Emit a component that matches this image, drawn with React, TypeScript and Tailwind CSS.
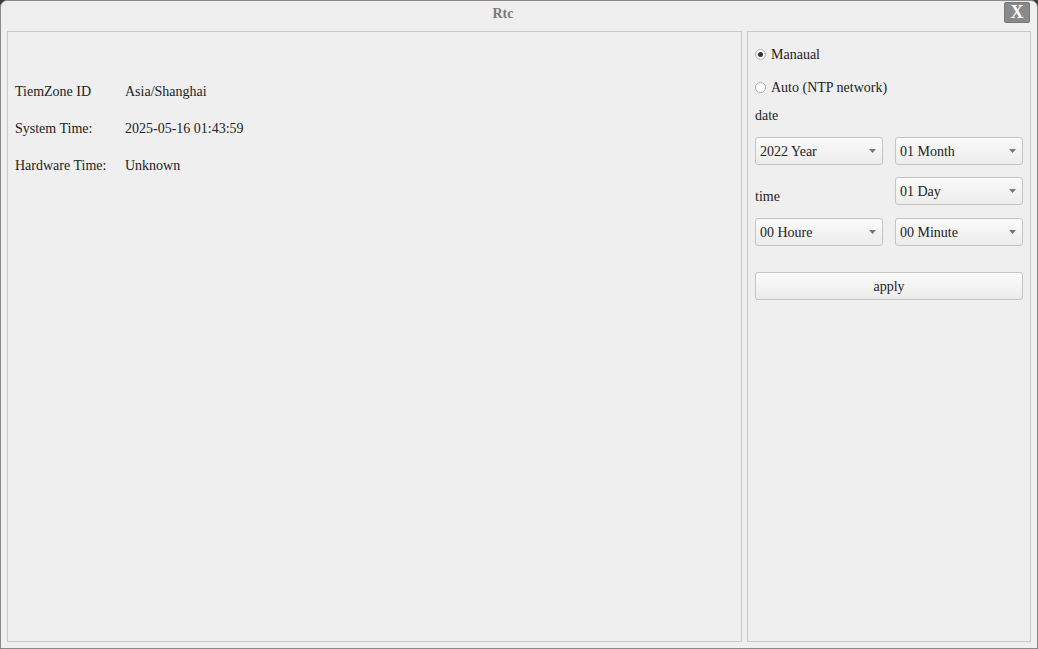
import React from 'react';

const serif = { fontFamily: '"Liberation Serif", "DejaVu Serif", serif' };

function Combo({ label }: { label: string }) {
  return (
    <div className="flex h-[28px] w-[128px] items-center justify-between rounded-[3px] border border-[#c4c4c4] bg-gradient-to-b from-[#fbfbfb] to-[#ececec] pl-[4px] pr-[6px] text-[14px] text-[#222]">
      <span>{label}</span>
      <svg width="7" height="4" viewBox="0 0 7 4">
        <path d="M0 0h7L3.5 4z" fill="#777" />
      </svg>
    </div>
  );
}

function Radio({ checked, label }: { checked?: boolean; label: string }) {
  return (
    <div className="flex items-center gap-[5px] text-[14px] text-[#222]">
      <span className="flex h-[11px] w-[11px] items-center justify-center rounded-full border border-[#aaa] bg-white">
        {checked && <span className="h-[5px] w-[5px] rounded-full bg-[#333]" />}
      </span>
      <span>{label}</span>
    </div>
  );
}

export default function App() {
  const info = [
    ['TiemZone ID', 'Asia/Shanghai'],
    ['System Time:', '2025-05-16 01:43:59'],
    ['Hardware Time:', 'Unknown'],
  ];

  return (
    <div className="h-[649px] w-[1038px] bg-[#3a3a3a]" style={serif}>
      <div className="flex h-full flex-col rounded-t-[7px] border border-[#8a8a8a] bg-[#efefef]">
        {/* title bar, title centred left of the close button */}
        <div className="relative flex h-[24px] items-center justify-center pr-[32px]">
          <span className="text-[14px] font-bold text-[#7a7a7a]">Rtc</span>
          <button className="absolute right-[7px] top-[1px] flex h-[21px] w-[26px] items-center justify-center rounded-[2px] border border-[#777] bg-[#8a8a8a] text-[18px] font-bold text-white">
            X
          </button>
        </div>

        <div className="flex flex-1 gap-[5px] px-[6px] pb-[6px] pt-[6px]">
          {/* current time info */}
          <div className="flex w-[735px] flex-col gap-[19px] border border-[#c9c9c9] px-[7px] pt-[50px]">
            {info.map(([k, v]) => (
              <div key={k} className="flex h-[18px] items-center text-[14px] text-[#222]">
                <span className="w-[110px]">{k}</span>
                <span>{v}</span>
              </div>
            ))}
          </div>

          {/* settings */}
          <div className="flex flex-1 flex-col border border-[#c9c9c9] pl-[7px] pr-[7px] pt-[12px]">
            <Radio checked label="Manaual" />
            <div className="mt-[12px]">
              <Radio label="Auto (NTP network)" />
            </div>
            <div className="mt-[7px] text-[14px] text-[#222]">date</div>
            <div className="mt-[11px] flex justify-between">
              <Combo label="2022 Year" />
              <Combo label="01 Month" />
            </div>
            <div className="mt-[12px] flex items-end justify-between">
              <span className="-mb-[2px] text-[14px] text-[#222]">time</span>
              <Combo label="01 Day" />
            </div>
            <div className="mt-[13px] flex justify-between">
              <Combo label="00 Houre" />
              <Combo label="00 Minute" />
            </div>
            <button className="mt-[26px] h-[28px] w-full rounded-[3px] border border-[#c4c4c4] bg-gradient-to-b from-[#fbfbfb] to-[#ececec] text-[14px] text-[#222]">
              apply
            </button>
          </div>
        </div>
      </div>
    </div>
  );
}
